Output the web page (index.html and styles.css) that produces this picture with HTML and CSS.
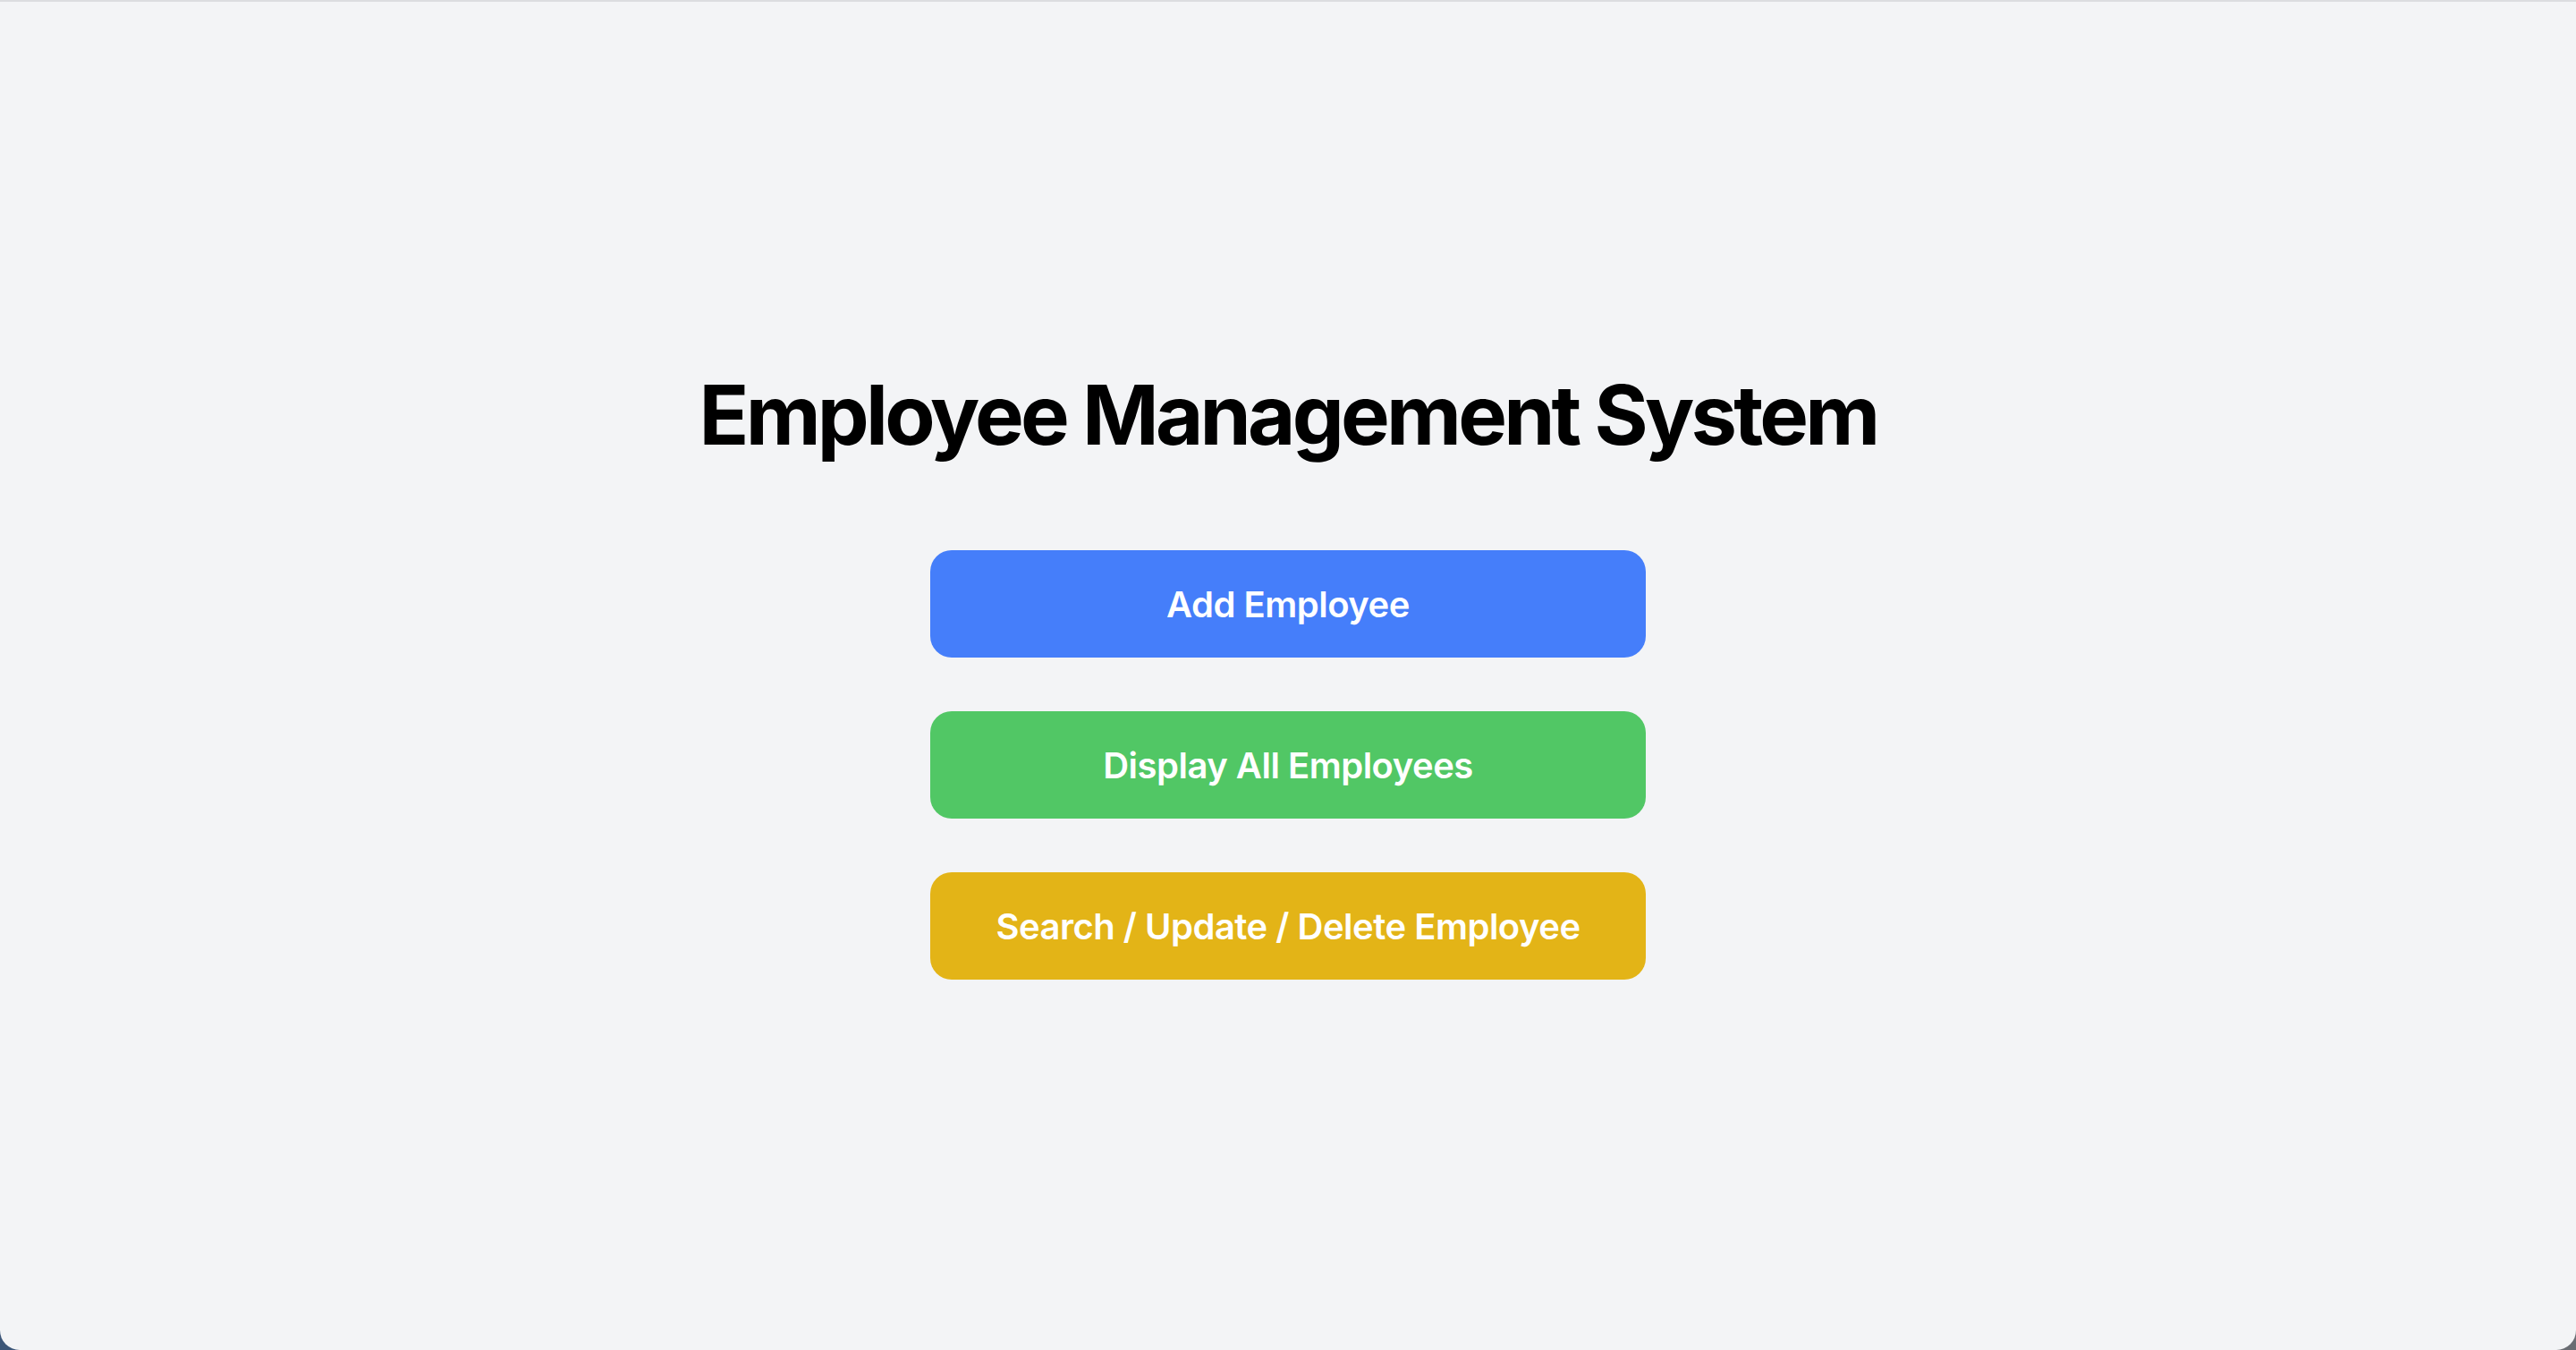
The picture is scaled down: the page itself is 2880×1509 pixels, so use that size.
FILE: index.html
```html
<!DOCTYPE html>
<html lang="en">
<head>
<meta charset="utf-8">
<title>Employee Management System</title>
<link rel="stylesheet" href="styles.css">
</head>
<body>
<div class="window">
  <main class="menu">
    <h1 class="title">Employee Management System</h1>
    <div class="actions">
      <button class="btn btn-blue">Add Employee</button>
      <button class="btn btn-green">Display All Employees</button>
      <button class="btn btn-yellow">Search / Update / Delete Employee</button>
    </div>
  </main>
</div>
</body>
</html>
```
FILE: styles.css
```css
* { box-sizing: border-box; }
html, body { margin: 0; padding: 0; height: 100%; }
body {
  background: linear-gradient(90deg, #3c5678 0%, #5a6272 50%, #6a6d73 100%);
  font-family: Inter, "Noto Sans", sans-serif;
}
.window {
  height: 1509px;
  background: #f3f4f6;
  border-top: 2px solid #dcdde0;
  border-radius: 0 0 22px 22px;
  display: flex;
  align-items: center;
  justify-content: center;
}
.menu {
  display: flex;
  flex-direction: column;
  align-items: center;
}
.title {
  margin: 0 0 103px;
  font-size: 92px;
  line-height: 96px;
  font-weight: 700;
  color: #000;
  letter-spacing: -3.8px;
}
.actions {
  display: flex;
  flex-direction: column;
  gap: 60px;
}
.btn {
  width: 800px;
  height: 120px;
  border: none;
  border-radius: 24px;
  color: #fff;
  font-family: Inter, "Noto Sans", sans-serif;
  font-size: 40px;
  font-weight: 600;
  letter-spacing: -0.5px;
  cursor: pointer;
}
.btn-blue { background: #457efa; }
.btn-green { background: #51c765; }
.btn-yellow { background: #e3b417; }
```
